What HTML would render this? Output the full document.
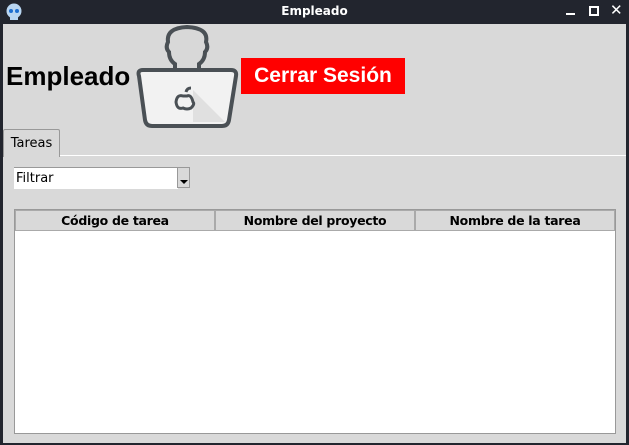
<!DOCTYPE html>
<html><head><style>
body{margin:0;width:629px;height:445px;background:#22252e;position:relative;overflow:hidden;font-family:"DejaVu Sans","Liberation Sans",sans-serif}
.a{position:absolute}
</style></head><body>
<div class="a" style="left:0;top:0;width:629px;height:24px;background:#22252e"></div>
<svg class="a" style="left:5px;top:3px" width="18" height="18" viewBox="0 0 18 18"><circle cx="9" cy="8" r="7.5" fill="#b9d6f2"/><rect x="5" y="13" width="8" height="4" fill="#b9d6f2"/><circle cx="6" cy="8" r="2" fill="#1e6fd0"/><circle cx="12" cy="8" r="2" fill="#1e6fd0"/></svg>
<div class="a" style="left:0;width:629px;top:4px;text-align:center;color:#fff;font-size:12px;font-weight:bold">Empleado</div>
<div class="a" style="left:566px;top:13px;width:9px;height:2px;background:#fff"></div>
<div class="a" style="left:589px;top:6px;width:6px;height:6px;border:2px solid #fff"></div>
<div class="a" style="left:610px;top:1px;color:#fff;font-size:15px;font-weight:bold">✕</div>
<div class="a" style="left:3px;top:24px;width:623px;height:419px;background:#d9d9d9"></div>
<div class="a" style="left:6px;top:61px;font-family:'Liberation Sans',sans-serif;font-weight:bold;font-size:26px;color:#000">Empleado</div>
<svg class="a" style="left:133px;top:24px" width="108" height="106" viewBox="0 0 108 106">
<path d="M42 48 V40 Q36 36 36 28 Q32 24 35 18 Q33 4 54 3 Q76 4 73 18 Q76 24 72 28 Q72 36 66 40 V48 Z" fill="#d8d8d8" stroke="#4a5055" stroke-width="4"/>
<path d="M6 52 Q4 46 10 46 H98 Q104 46 103 52 L96 96 Q95 102 89 102 H19 Q13 102 12 96 Z" fill="#f2f2f2" stroke="#4a5055" stroke-width="4"/>
<path d="M60 66 L92 98 H60 Z" fill="#e0e0e0"/>
<path d="M50 72 Q44 70 43 78 Q44 86 50 84 Q54 86 58 84 Q62 80 60 78 Q58 70 54 72 Z" fill="none" stroke="#4a5055" stroke-width="3"/>
<path d="M53 68 Q54 64 58 64" stroke="#4a5055" stroke-width="3" fill="none"/>
</svg>
<div class="a" style="left:241px;top:58px;width:164px;height:36px;background:#ff0000;color:#fff;font-family:'Liberation Sans',sans-serif;font-weight:bold;font-size:21px;line-height:36px;text-align:center">Cerrar Sesión</div>
<div class="a" style="left:3px;top:155px;width:623px;height:1px;background:#fff"></div>
<div class="a" style="left:3px;top:129px;width:55px;height:27px;background:#d9d9d9;border:1px solid #999;border-bottom:none;border-radius:2px 2px 0 0;font-size:13px;line-height:27px;text-align:center">Tareas</div>
<div class="a" style="left:14px;top:167px;width:162px;height:21px;background:#fff;border-top:1px solid #999;font-size:13px;line-height:21px;padding-left:2px">Filtrar</div>
<div class="a" style="left:177px;top:167px;width:13px;height:21px;background:#d9d9d9;border:1px solid #999;box-sizing:border-box"></div>
<div class="a" style="left:180px;top:180px;width:0;height:0;border-left:4px solid transparent;border-right:4px solid transparent;border-top:4px solid #000"></div>
<div class="a" style="left:14px;top:209px;width:600px;height:223px;background:#fff;border:1px solid #999"></div>
<div class="a" style="left:15px;top:210px;width:600px;height:21px;display:flex;font-size:12.5px;font-weight:bold;letter-spacing:-0.3px">
<div style="flex:1;border:1px solid #aaa;background:#d9d9d9;text-align:center;line-height:19px">Código de tarea</div>
<div style="flex:1;border:1px solid #aaa;background:#d9d9d9;text-align:center;line-height:19px">Nombre del proyecto</div>
<div style="flex:1;border:1px solid #aaa;background:#d9d9d9;text-align:center;line-height:19px">Nombre de la tarea</div>
</div>
</body></html>
